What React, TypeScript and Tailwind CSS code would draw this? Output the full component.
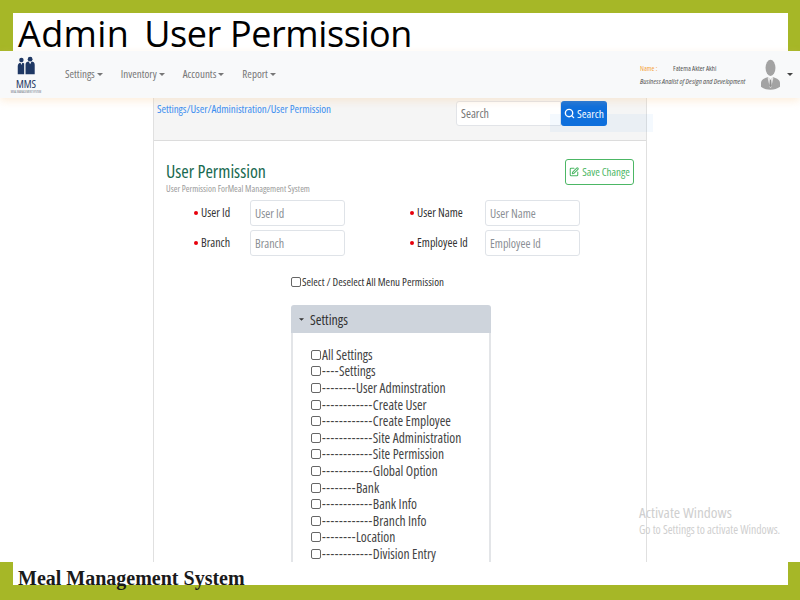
import { Search, SquarePen } from 'lucide-react';

const ui = 'font-["Open_Sans",sans-serif] font-stretch-condensed';

const menus = ['Settings', 'Inventory', 'Accounts', 'Report'];

const permissions = [
  'All Settings',
  '----Settings',
  '--------User Adminstration',
  '------------Create User',
  '------------Create Employee',
  '------------Site Administration',
  '------------Site Permission',
  '------------Global Option',
  '--------Bank',
  '------------Bank Info',
  '------------Branch Info',
  '--------Location',
  '------------Division Entry',
];

// ── Small parts ───────────────────────────────────────────────────
function Caret({ className }: { className?: string }) {
  return (
    <svg viewBox="0 0 8 4" className={className} fill="currentColor">
      <path d="M0 0h8L4 4z" />
    </svg>
  );
}

function Check() {
  return <input type="checkbox" className="size-[10px] shrink-0 appearance-none rounded-[2px] border border-[#666] bg-white" />;
}

function Logo() {
  return (
    <div className="flex w-[34px] flex-col items-center">
      <svg viewBox="0 0 24 20" className="h-[20px] w-[22px]" fill="#1f3864">
        <circle cx="7" cy="3.500" r="2.400" />
        <circle cx="16.500" cy="2.600" r="2.600" />
        <path d="M3 19V10c0-2 1.500-3.600 3-3.600L7 9l1-2.600c.8 0 1.600.4 2 1V19z" />
        <path d="M11.500 19V8.500c0-2 1.600-3.300 3.500-3.300l1.500 3 1.500-3c2 0 3.500 1.300 3.500 3.300V19z" />
      </svg>
      <span className={`${ui} mt-[1px] text-[11px] leading-[13px] text-[#1f3864]`}>MMS</span>
      <span className={`${ui} whitespace-nowrap text-[3px] leading-[4px] text-gray-500`}>MEAL MANAGEMENT SYSTEM</span>
    </div>
  );
}

function Avatar() {
  return (
    <svg viewBox="0 0 20 32" className="h-[31px] w-[19px]">
      <ellipse cx="10" cy="9" rx="5.200" ry="8.500" fill="#a3a3a3" />
      <path d="M0 29v-4c0-3 3-5 7-6l3 2 3-2c4 1 7 3 7 6v4c-3 2-6 3-10 3s-7-1-10-3z" fill="#a3a3a3" />
      <path d="M8 19l2 2 2-2 1 1-2.400 10h-1.200L7 20z" fill="#e5e5e5" />
      <path d="M9.400 21.500h1.200l.6 6-1.200 2-1.200-2z" fill="#8f8f8f" />
    </svg>
  );
}

function Field({ label, labelWidth }: { label: string; labelWidth: string }) {
  return (
    <div className="flex items-center">
      <span className="mr-[4px] size-[2px] rounded-full bg-red-600 ring-1 ring-red-600" />
      <label className={`${labelWidth} text-[12px] font-medium text-[#333]`}>{label}</label>
      <input
        placeholder={label}
        className="h-[26px] w-[95px] rounded-[3px] border border-[#dfe3e8] bg-white px-[4px] text-[12px] placeholder:text-[#8b8f94]"
      />
    </div>
  );
}

function PermissionRow({ text }: { text: string }) {
  const name = text.replace(/^-+/, '');
  const dashes = text.slice(0, text.length - name.length);
  return (
    <li className="flex h-[16.600px] items-center gap-px whitespace-nowrap text-[13.500px] leading-[16px] text-[#444]">
      <Check />
      <span>
        <span className="tracking-[0.55px]">{dashes}</span>
        {name}
      </span>
    </li>
  );
}

// ── Component ─────────────────────────────────────────────────────
export default function App() {
  return (
    <div className="relative flex h-[600px] w-[800px] flex-col overflow-hidden bg-[#a6b727]">
      {/* Slide title */}
      <div className="ml-[13px] mr-[12px] mt-[13px] h-[38px] bg-white pl-[5px] font-['Open_Sans',sans-serif] text-[36px] leading-[42px] tracking-[-0.4px] text-black">
        <span className="mr-[-3px] tracking-[0.4px]">Admin</span>&nbsp; User Permission
      </div>

      {/* Navbar */}
      <nav className={`${ui} relative z-10 flex h-[47px] items-center bg-[#f8f9fa] shadow-[0_3px_8px_rgba(250,200,140,0.3)]`}>
        <div className="ml-[9px] w-[56px]">
          <Logo />
        </div>
        <div className="flex items-center gap-[18px] text-[11px] text-[#777]">
          {menus.map((m) => (
            <span key={m} className="flex items-center gap-[2px]">
              {m}
              <Caret className="h-[3px] w-[6px]" />
            </span>
          ))}
        </div>
        <div className="ml-auto flex w-[108px] flex-col gap-[4px] text-[7px] leading-[9px] text-[#555]">
          <div className="flex">
            <span className="w-[33px] text-[#f5a33a]">Name :</span>
            <span>Fatema Akter Akhi</span>
          </div>
          <span className="whitespace-nowrap text-[7.600px] italic">Business Analist of Design and Development</span>
        </div>
        <div className="ml-[13px] mr-[7px] flex items-center gap-[7px]">
          <Avatar />
          <Caret className="h-[3px] w-[6px] text-[#444]" />
        </div>
      </nav>

      {/* Page */}
      <main className={`${ui} flex h-[464px] justify-center overflow-hidden bg-white`}>
        <section className="h-full w-[494px] border-x border-[#e0e0e0]">
          <div className="flex h-[43px] border-b border-[#dcdcdc] bg-[#f5f5f5]">
            <a className="ml-[3px] mt-[4px] text-[11px] leading-[14px] tracking-[-0.05px] text-[#3b8ef0]">
              Settings/User/Administration/User Permission
            </a>
            <div className="ml-auto mr-[39px] mt-[3px] flex h-[25px]">
              <input
                placeholder="Search"
                className="h-[25px] w-[105px] rounded-l-[3px] border border-[#e2e4e8] bg-white px-[4px] text-[12px] placeholder:text-[#777]"
              />
              <button className="flex w-[46px] items-center justify-center gap-[2px] rounded-[3px] bg-[#0d6edc] text-[11.500px] text-white">
                <Search size={11} strokeWidth={3} />
                Search
              </button>
            </div>
          </div>

          <div className="px-[12px] pt-[18px]">
            <div className="flex items-start justify-between">
              <div className="pt-px">
                <h1 className="text-[18px] leading-[22px] text-[#17694f]">User Permission</h1>
                <p className="text-[9px] leading-[14px] text-[#9a9a9a]">User Permission ForMeal Management System</p>
              </div>
              <button className="flex h-[26px] w-[69px] items-center justify-center gap-[3px] rounded-[3px] border border-[#4cb765] text-[11px] text-[#4cb765]">
                <SquarePen size={10} strokeWidth={2.500} />
                Save Change
              </button>
            </div>

            <div className="ml-[29px] mt-[4px] grid grid-cols-[216px_auto] gap-y-[4px]">
              <Field label="User Id" labelWidth="w-[49px]" />
              <Field label="User Name" labelWidth="w-[68px]" />
              <Field label="Branch" labelWidth="w-[49px]" />
              <Field label="Employee Id" labelWidth="w-[68px]" />
            </div>

            <div className="ml-[125px] mt-[19px] flex h-[14px] items-center gap-[1px] text-[11px] text-[#333]">
              <Check />
              Select / Deselect All Menu Permission
            </div>

            {/* Permission accordion */}
            <div className="ml-[125px] mt-[16px] w-[200px] overflow-hidden rounded-t-[3px]">
              <div className="flex h-[28px] items-center gap-[6px] bg-[#ced4dc] pl-[8px] text-[14px] text-[#333]">
                <Caret className="h-[3px] w-[5px]" />
                Settings
              </div>
              <ul className="border-x-2 border-[#e3e5e8] pb-[20px] pl-[18px] pt-[13.500px]">
                {permissions.map((p) => (
                  <PermissionRow key={p} text={p} />
                ))}
              </ul>
            </div>
          </div>
        </section>
      </main>

      {/* Footer caption */}
      <footer className="ml-[13px] mr-[12px] h-[23px] bg-white pl-[5px] font-['Liberation_Serif',serif] text-[20px] font-bold leading-[32px] text-[#1a1a1a]">
        Meal Management System
      </footer>

      {/* Faint overlays from the original capture */}
      <div className="absolute left-[550px] top-[114px] h-[18px] w-[103px] bg-[#2080f0]/5" />
      <div className={`${ui} absolute left-[639px] top-[503px] text-[#cfcfcf]`}>
        <p className="text-[15.300px] leading-[18px]">Activate Windows</p>
        <p className="mt-px whitespace-nowrap text-[11.700px] leading-[14px]">Go to Settings to activate Windows.</p>
      </div>
    </div>
  );
}
